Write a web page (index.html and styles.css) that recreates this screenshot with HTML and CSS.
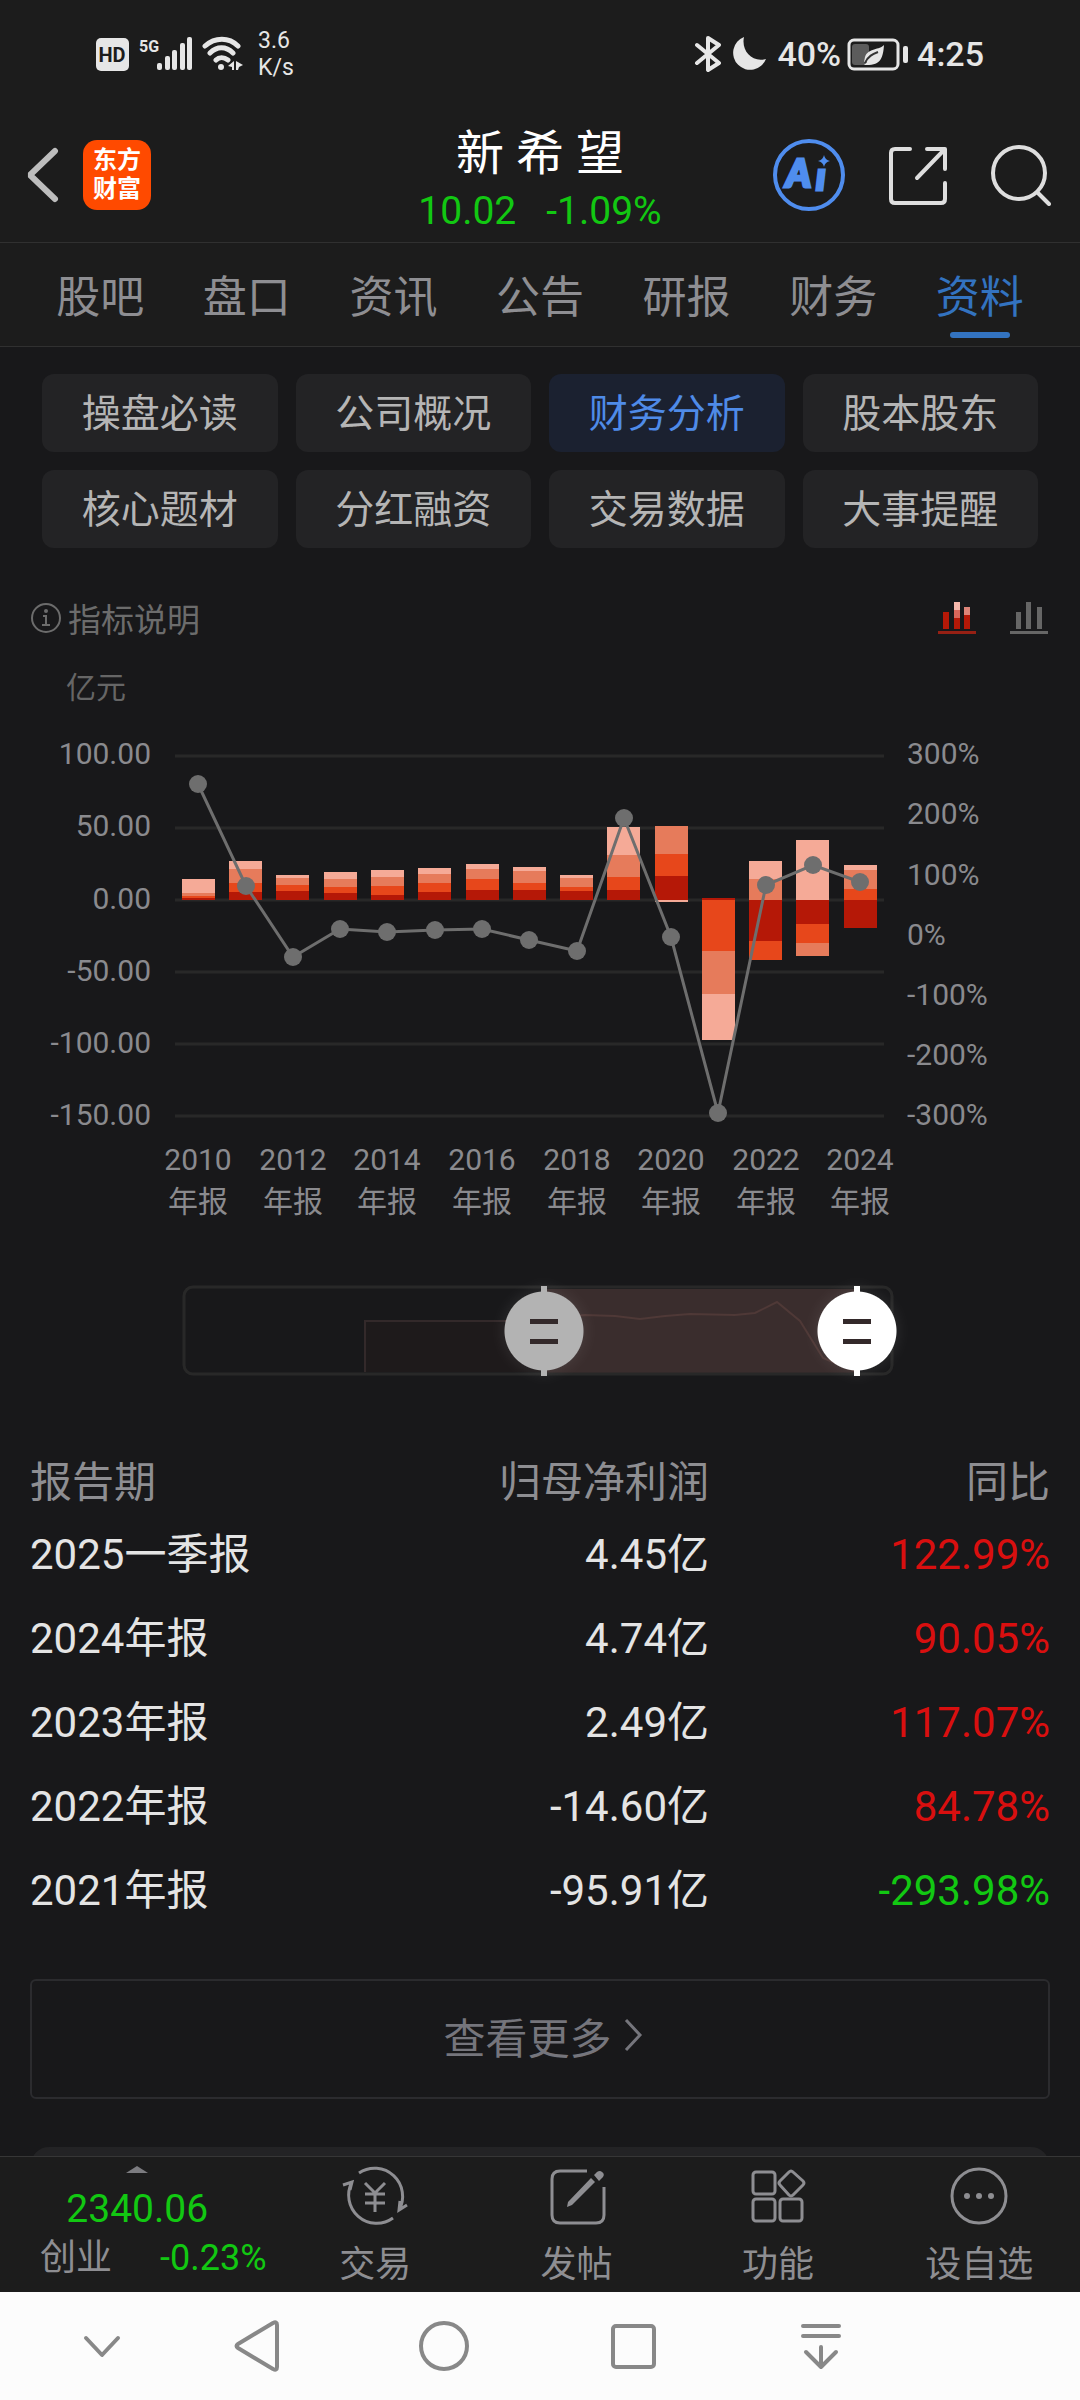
FILE: index.html
```html
<!DOCTYPE html>
<html lang="zh-CN">
<head>
<meta charset="utf-8">
<meta name="viewport" content="width=device-width, initial-scale=1">
<title>新希望 - 财务分析</title>
<link rel="stylesheet" href="styles.css">
</head>
<body>
<div class="app">
  <div class="status">
    <div class="status-group">
      <svg class="hd" width="33" height="33" viewBox="0 0 33 33"><rect width="33" height="33" rx="5" fill="#e6e6e6"/><text x="16" y="24" text-anchor="middle" font-size="20" font-weight="700" fill="#1c1c1c">HD</text></svg>
      <svg class="signal" width="53" height="36" viewBox="0 0 53 36" fill="#e6e6e6"><text x="0" y="16" font-size="16" font-weight="700">5G</text><rect x="18" y="27" width="5" height="7" rx="2"/><rect x="26" y="20" width="5" height="14" rx="2"/><rect x="33" y="14" width="5" height="20" rx="2"/><rect x="41" y="7" width="5" height="27" rx="2"/><rect x="48" y="1" width="5" height="33" rx="2"/></svg>
      <svg class="wifi" width="42" height="36" viewBox="0 0 42 36" fill="none" stroke="#e6e6e6" stroke-width="5" stroke-linecap="round"><path d="M3 10C13 1 27 1 36 10M8 17C15 10 24 10 31 17M14 24C17 21 22 21 26 24"/><circle cx="19" cy="31" r="3" fill="#e6e6e6" stroke="none"/><path fill="#e6e6e6" stroke="none" d="M32 25v9h-2v-3l-4-1zM34 25l7 4-4 2-1 3h-2z"/></svg>
      <div class="speed">3.6<br>K/s</div>
    </div>
    <div class="status-group">
      <svg class="bt" width="28" height="36" viewBox="0 0 28 36" fill="none" stroke="#e6e6e6" stroke-width="4" stroke-linejoin="round" stroke-linecap="round"><path d="M3 9l22 18-11 7V2l11 7L3 27"/></svg>
      <svg class="moon" width="35" height="36" viewBox="0 0 35 36"><path d="M12 1A17 17 0 1 0 34 23C20 27 9 15 12 1z" fill="#e6e6e6"/></svg>
      <span class="clock">40%</span>
      <svg class="battery" width="62" height="33" viewBox="0 0 62 33"><rect x="2" y="2" width="49" height="29" rx="5" fill="none" stroke="#e6e6e6" stroke-width="3"/><rect x="5" y="6" width="17" height="21" rx="3" fill="#5c5c5c"/><path d="M37 7C33 12 21 10 18 19L17 24 20 24 17 27C34 28 36 20 37 7z" fill="#e6e6e6"/><path d="M18 25C21 18 26 16 31 14" stroke="#333" stroke-width="2" fill="none"/><rect x="56" y="8" width="5" height="17" rx="2" fill="#e6e6e6"/></svg>
      <span class="clock">4:25</span>
    </div>
  </div>

  <header class="header">
    <div class="header-left">
      <button class="icon-btn" aria-label="返回"><svg width="34" height="58" viewBox="0 0 34 58" fill="none" stroke="#bdbdbd" stroke-width="6" stroke-linecap="round" stroke-linejoin="bevel"><path d="M30 5L5 29l25 24"/></svg></button>
      <a class="logo" href="#">东方<br>财富</a>
    </div>
    <div class="quote">
      <h1>新 希 望</h1>
      <p class="quote-row down"><span>10.02</span><span>-1.09%</span></p>
    </div>
    <div class="header-right">
      <button class="icon-btn" aria-label="智能助手"><svg width="72" height="72" viewBox="0 0 72 72"><circle cx="36" cy="36" r="34" fill="none" stroke="#4f8dee" stroke-width="4"/><text class="ai" x="13" y="48" font-size="38">A</text><text class="ai" x="43" y="51" font-size="38">ı</text><path d="M51 16q1 5 6 6-5 1-6 6-1-5-6-6 5-1 6-6z" fill="#4f8dee"/></svg></button>
      <button class="icon-btn" aria-label="分享"><svg width="60" height="60" viewBox="0 0 60 60" fill="none" stroke="#dedede" stroke-width="4" stroke-linecap="round" stroke-linejoin="round"><path d="M22 4H7Q3 4 3 8v46q0 4 4 4h46q4 0 4-4V38M39 4h18v20M56 5L29 33"/></svg></button>
      <button class="icon-btn" aria-label="搜索"><svg width="60" height="62" viewBox="0 0 60 62" fill="none" stroke="#dedede" stroke-width="4" stroke-linecap="round"><circle cx="28" cy="29" r="26"/><path d="M47 49l11 11"/></svg></button>
    </div>
  </header>

  <nav class="tabs">
    <a href="#">股吧</a><a href="#">盘口</a><a href="#">资讯</a><a href="#">公告</a><a href="#">研报</a><a href="#">财务</a><a href="#" class="active" aria-current="page">资料</a>
  </nav>

  <main class="content">
    <div class="chips">
      <button>操盘必读</button><button>公司概况</button><button class="active">财务分析</button><button>股本股东</button>
      <button>核心题材</button><button>分红融资</button><button>交易数据</button><button>大事提醒</button>
    </div>

    <div class="chart-head">
      <button class="explain"><svg width="32" height="32" viewBox="0 0 32 32" fill="none" stroke="#6c6c6c" stroke-width="2"><circle cx="16" cy="16" r="14"/><path d="M13 14h3v9M12 23h8"/><circle cx="16" cy="9" r="2" fill="#6c6c6c" stroke="none"/></svg>指标说明</button>
      <div class="modes">
        <button class="icon-btn" aria-label="堆叠图"><svg width="40" height="34" viewBox="0 0 40 34"><g fill="#b51807"><rect x="6" y="11" width="6" height="17"/><rect x="17" y="17" width="6" height="11"/><rect x="27" y="14" width="6" height="14"/></g><rect x="17" y="1" width="6" height="8" fill="#f6b8ac"/><rect x="17" y="9" width="6" height="8" fill="#d9665a"/><rect x="27" y="6" width="6" height="8" fill="#dd8478"/><rect x="1" y="30" width="38" height="3" fill="#962014"/></svg></button>
        <button class="icon-btn" aria-label="柱状图"><svg width="40" height="34" viewBox="0 0 40 34" fill="#666"><rect x="7" y="11" width="5" height="17"/><rect x="17" y="1" width="5" height="27"/><rect x="28" y="6" width="5" height="22"/><rect x="1" y="30" width="38" height="3"/></svg></button>
      </div>
    </div>

    <svg class="chart" viewBox="0 0 1080 580" role="img" aria-label="归母净利润与同比">
      <text class="unit" x="66" y="38">亿元</text>
      <path class="grid" d="M175 96h709M175 168h709M175 240h709M175 312h709M175 384h709M175 456h709"/>
      <g class="axis axis-end">
        <text x="151" y="104">100.00</text><text x="151" y="176">50.00</text><text x="151" y="249">0.00</text><text x="151" y="321">-50.00</text><text x="151" y="393">-100.00</text><text x="151" y="465">-150.00</text>
      </g>
      <g class="axis">
        <text x="907" y="104">300%</text><text x="907" y="164">200%</text><text x="907" y="225">100%</text><text x="907" y="285">0%</text><text x="907" y="345">-100%</text><text x="907" y="405">-200%</text><text x="907" y="465">-300%</text>
      </g>
      <g class="q4">
        <rect x="182" y="219" width="33" height="14"/><rect x="229" y="201" width="33" height="8"/><rect x="276" y="215" width="33" height="3"/><rect x="324" y="212" width="33" height="7"/><rect x="371" y="210" width="33" height="7"/><rect x="418" y="208" width="33" height="6"/><rect x="466" y="204" width="33" height="5"/><rect x="513" y="207" width="33" height="4"/><rect x="560" y="215" width="33" height="3"/><rect x="607" y="167" width="33" height="28"/><rect x="655" y="240" width="33" height="2"/><rect x="702" y="334" width="33" height="46"/><rect x="749" y="201" width="33" height="18"/><rect x="796" y="180" width="33" height="60"/><rect x="844" y="205" width="33" height="5"/>
      </g>
      <g class="q3">
        <rect x="182" y="233" width="33" height="3"/><rect x="229" y="209" width="33" height="14"/><rect x="276" y="218" width="33" height="7"/><rect x="324" y="219" width="33" height="8"/><rect x="371" y="217" width="33" height="9"/><rect x="418" y="214" width="33" height="9"/><rect x="466" y="209" width="33" height="10"/><rect x="513" y="211" width="33" height="12"/><rect x="560" y="218" width="33" height="9"/><rect x="607" y="195" width="33" height="22"/><rect x="655" y="166" width="33" height="28"/><rect x="702" y="291" width="33" height="43"/><rect x="749" y="219" width="33" height="21"/><rect x="796" y="283" width="33" height="13"/><rect x="844" y="210" width="33" height="19"/>
      </g>
      <g class="q2">
        <rect x="182" y="236" width="33" height="2"/><rect x="229" y="223" width="33" height="9"/><rect x="276" y="225" width="33" height="6"/><rect x="324" y="227" width="33" height="6"/><rect x="371" y="226" width="33" height="9"/><rect x="418" y="223" width="33" height="9"/><rect x="466" y="219" width="33" height="11"/><rect x="513" y="223" width="33" height="7"/><rect x="560" y="227" width="33" height="4"/><rect x="607" y="217" width="33" height="13"/><rect x="655" y="194" width="33" height="22"/><rect x="702" y="240" width="33" height="51"/><rect x="749" y="281" width="33" height="19"/><rect x="796" y="264" width="33" height="19"/><rect x="844" y="229" width="33" height="11"/>
      </g>
      <g class="q1">
        <rect x="182" y="238" width="33" height="2"/><rect x="229" y="232" width="33" height="8"/><rect x="276" y="231" width="33" height="9"/><rect x="324" y="233" width="33" height="7"/><rect x="371" y="235" width="33" height="5"/><rect x="418" y="232" width="33" height="8"/><rect x="466" y="230" width="33" height="10"/><rect x="513" y="230" width="33" height="10"/><rect x="560" y="231" width="33" height="9"/><rect x="607" y="230" width="33" height="10"/><rect x="655" y="216" width="33" height="24"/><rect x="702" y="238" width="33" height="2"/><rect x="749" y="240" width="33" height="41"/><rect x="796" y="240" width="33" height="24"/><rect x="844" y="240" width="33" height="28"/>
      </g>
      <polyline class="line" points="198,124 246,226 293,297 340,269 387,272 435,270 482,269 529,280 577,291 624,158 671,277 718,453 766,225 813,205 860,222"/>
      <g class="dots">
        <circle cx="198" cy="124" r="9"/><circle cx="246" cy="226" r="9"/><circle cx="293" cy="297" r="9"/><circle cx="340" cy="269" r="9"/><circle cx="387" cy="272" r="9"/><circle cx="435" cy="270" r="9"/><circle cx="482" cy="269" r="9"/><circle cx="529" cy="280" r="9"/><circle cx="577" cy="291" r="9"/><circle cx="624" cy="158" r="9"/><circle cx="671" cy="277" r="9"/><circle cx="718" cy="453" r="9"/><circle cx="766" cy="225" r="9"/><circle cx="813" cy="205" r="9"/><circle cx="860" cy="222" r="9"/>
      </g>
      <g class="axis axis-mid">
        <text x="198" y="510">2010</text><text x="198" y="552">年报</text>
        <text x="293" y="510">2012</text><text x="293" y="552">年报</text>
        <text x="387" y="510">2014</text><text x="387" y="552">年报</text>
        <text x="482" y="510">2016</text><text x="482" y="552">年报</text>
        <text x="577" y="510">2018</text><text x="577" y="552">年报</text>
        <text x="671" y="510">2020</text><text x="671" y="552">年报</text>
        <text x="766" y="510">2022</text><text x="766" y="552">年报</text>
        <text x="860" y="510">2024</text><text x="860" y="552">年报</text>
      </g>
    </svg>

    <div class="range">
      <svg viewBox="0 0 1080 92" aria-hidden="true">
        <rect x="544" y="4" width="313" height="84" fill="#3a2d2d"/>
        <path d="M365 87V36H544V87z" fill="#1e1a1b"/>
        <path d="M365 87V36H505" fill="none" stroke="#33292a" stroke-width="2"/>
        <path d="M505 36L585 30 615 31 640 34 665 31 690 29 735 30 755 28 777 17 800 36 823 73 857 87" fill="none" stroke="#4f3937" stroke-width="2"/>
        <rect x="184" y="2" width="708" height="87" rx="9" fill="none" stroke="#282828" stroke-width="3"/>
      </svg>
      <input class="thumb-start" type="range" min="0" max="708" value="360" aria-label="起始报告期">
      <input class="thumb-end" type="range" min="0" max="708" value="673" aria-label="结束报告期">
    </div>

    <table class="report">
      <thead><tr><th>报告期</th><th>归母净利润</th><th>同比</th></tr></thead>
      <tbody>
        <tr><td>2025一季报</td><td>4.45亿</td><td class="up">122.99%</td></tr>
        <tr><td>2024年报</td><td>4.74亿</td><td class="up">90.05%</td></tr>
        <tr><td>2023年报</td><td>2.49亿</td><td class="up">117.07%</td></tr>
        <tr><td>2022年报</td><td>-14.60亿</td><td class="up">84.78%</td></tr>
        <tr><td>2021年报</td><td>-95.91亿</td><td class="down">-293.98%</td></tr>
      </tbody>
    </table>

    <button class="more">查看更多<svg width="20" height="34" viewBox="0 0 20 34" fill="none" stroke="#75757c" stroke-width="3"><path d="M3 2l14 15L3 32"/></svg></button>
    <section class="next-card"></section>
  </main>

  <footer class="toolbar">
    <button class="index">
      <svg width="22" height="7" viewBox="0 0 22 7"><path d="M0 7L11 0l11 7z" fill="#7c7c80"/></svg>
      <span class="index-value down">2340.06</span>
      <span class="index-row"><span>创业</span><span class="down">-0.23%</span></span>
    </button>
    <button class="tool"><svg width="68" height="60" viewBox="0 0 68 60" fill="none" stroke="#8e8e92" stroke-width="3"><path d="M18 7A28 28 0 0 1 58 44M52 52A28 28 0 0 1 11 16M2 19l9-3-2 8M59 35l-1 9 8-5"/><path d="M24 17l10 10 10-10M34 27v19M24 28h20M24 37h20"/></svg>交易</button>
    <button class="tool"><svg width="60" height="60" viewBox="0 0 60 60" fill="none" stroke="#8e8e92" stroke-width="3"><path d="M40 5H13Q5 5 5 13v36q0 8 8 8h36q8 0 8-8V21"/><path d="M44 12L21 36l-1 5 5-2 23-23zM47 9l3-3q3-2 5 0 3 2 1 5l-4 4z" fill="#8e8e92" stroke="none"/></svg>发帖</button>
    <button class="tool"><svg width="60" height="60" viewBox="0 0 60 60" fill="none" stroke="#8e8e92" stroke-width="3"><rect x="5" y="6" width="22" height="22" rx="3"/><rect x="5" y="33" width="22" height="22" rx="3"/><rect x="32" y="33" width="22" height="22" rx="3"/><path d="M41 6q2-2 4 0l10 9q2 2 0 4l-10 10q-2 2-4 0L32 19q-2-2 0-4z"/></svg>功能</button>
    <button class="tool"><svg width="60" height="60" viewBox="0 0 60 60" fill="#8e8e92"><circle cx="30" cy="30" r="27" fill="none" stroke="#8e8e92" stroke-width="3"/><circle cx="18" cy="30" r="3"/><circle cx="30" cy="30" r="3"/><circle cx="42" cy="30" r="3"/></svg>设自选</button>
  </footer>

  <nav class="sysnav">
    <button aria-label="收起"><svg width="40" height="50" viewBox="0 0 40 50"><path d="M4 17l16 17 16-17"/></svg></button>
    <button aria-label="返回"><svg width="50" height="52" viewBox="0 0 50 52"><path d="M7 24Q4 26 7 28L42 49Q46 51 46 47V5Q46 1 42 3z"/></svg></button>
    <button aria-label="主页"><svg width="52" height="52" viewBox="0 0 52 52"><circle cx="26" cy="26" r="23"/></svg></button>
    <button aria-label="最近任务"><svg width="50" height="50" viewBox="0 0 50 50"><rect x="5" y="5" width="41" height="41" rx="3"/></svg></button>
    <button aria-label="通知"><svg width="44" height="50" viewBox="0 0 44 50"><path d="M4 5h36M4 15h36M22 26v19M7 31l15 15 15-15"/></svg></button>
  </nav>
</div>
</body>
</html>
```
FILE: styles.css
```css
* { box-sizing: border-box; }
body {
  margin: 0;
  background: #18181a;
  color: #e4e4e4;
  font-family: Roboto, "Noto Sans CJK SC", sans-serif;
}
button {
  margin: 0;
  padding: 0;
  border: 0;
  background: none;
  color: inherit;
  font: inherit;
}
a { color: inherit; text-decoration: none; }
svg { display: block; }
.down { color: #12c812; }
.up { color: #d90f0f; }

.app { display: flex; flex-direction: column; height: 100vh; }

/* status bar */
.status {
  display: flex;
  flex: none;
  align-items: center;
  justify-content: space-between;
  height: 108px;
  padding: 0 96px;
  background: #1c1c1c;
  color: #e6e6e6;
}
.status-group { display: flex; align-items: center; gap: 10px; }
.speed { margin-left: 4px; font-size: 23px; line-height: 27px; }
.battery { margin: 0 -2px 0 -4px; }
.clock { font-size: 34px; font-weight: 500; line-height: 36px; }

/* stock header */
.header {
  display: grid;
  flex: none;
  grid-template-columns: 1fr auto 1fr;
  align-items: center;
  height: 135px;
  padding: 0 29px 0 25px;
  border-bottom: 1px solid #303030;
  background: #1c1c1c;
}
.header-left { display: flex; align-items: center; gap: 24px; }
.header-right { display: flex; align-items: center; justify-content: flex-end; gap: 43px; }
.logo {
  width: 68px;
  height: 70px;
  padding: 6px 0;
  border-radius: 14px;
  background: #ff4a00;
  color: #fff;
  font-size: 24px;
  font-weight: 700;
  line-height: 29px;
  text-align: center;
}
.quote { padding: 12px 0 0 4px; text-align: center; }
.quote h1 { margin: 0; color: #fff; font-size: 48px; font-weight: 400; line-height: 60px; }
.quote-row {
  display: flex;
  justify-content: center;
  gap: 30px;
  margin: 0;
  font-size: 39px;
  line-height: 54px;
}
.ai { fill: #4f8dee; stroke: #4f8dee; stroke-width: 3px; font-family: Lato, sans-serif; font-weight: 900; font-style: italic; }

/* section tabs */
.tabs {
  display: flex;
  flex: none;
  height: 104px;
  padding: 0 27px;
  border-bottom: 1px solid #303030;
  background: #1c1c1c;
  color: #8e8e92;
  font-size: 44px;
  line-height: 110px;
}
.tabs a { position: relative; flex: 1; height: 103px; text-align: center; }
.tabs .active { color: #3373c0; }
.tabs .active::after {
  content: "";
  position: absolute;
  bottom: 8px;
  left: 50%;
  width: 60px;
  height: 6px;
  margin-left: -30px;
  border-radius: 3px;
  background: #3373c0;
}

.content { flex: 1; min-height: 0; overflow: auto; scrollbar-width: none; }

.chips {
  display: grid;
  grid-template-columns: repeat(4, 1fr);
  gap: 18px;
  padding: 27px 42px 0;
}
.chips button {
  height: 78px;
  padding-bottom: 7px;
  border-radius: 12px;
  background: #232325;
  color: #b5b5b5;
  font-size: 39px;
}
.chips .active { background: #1b2130; color: #4f8be8; }

.chart-head {
  display: flex;
  align-items: center;
  justify-content: space-between;
  height: 112px;
  padding: 28px 31px 0 30px;
}
.explain { display: flex; align-items: center; gap: 6px; color: #6c6c6c; font-size: 33px; }
.modes { display: flex; gap: 32px; }

.chart { width: 100%; }
.unit { fill: #666; font-size: 30px; }
.axis { fill: #8a8a8e; font-size: 30px; }
.axis-end { text-anchor: end; }
.axis-mid { text-anchor: middle; }
.grid { stroke: #282828; stroke-width: 3; }
.q1 { fill: #b51807; }
.q2 { fill: #e7471b; }
.q3 { fill: #e67b5b; }
.q4 { fill: #f5aa97; }
.line { fill: none; stroke: #6e6e6e; stroke-width: 3; }
.dots { fill: #6e6e6e; }

/* period range slider */
.range { display: grid; margin-top: 45px; }
.range svg, .range input { grid-area: 1 / 1; }
.range svg { width: 100%; }
.range input {
  appearance: none;
  height: 92px;
  margin: 0 148px 0 144px;
  background: none;
  pointer-events: none;
  filter: drop-shadow(0 0 8px rgba(255, 255, 255, 0.1));
}
.range input::-webkit-slider-thumb {
  appearance: none;
  width: 80px;
  height: 92px;
  border: 0;
  background:
    linear-gradient(#33292a, #33292a) 50% 34px / 28px 5px no-repeat,
    linear-gradient(#33292a, #33292a) 50% 54px / 28px 5px no-repeat,
    linear-gradient(var(--thumb), var(--thumb)) 50% 50% / 6px 90px no-repeat,
    radial-gradient(circle at 50% 50%, var(--thumb) 39px, transparent 40px);
  pointer-events: auto;
}
.thumb-start { --thumb: #b3b3b3; }
.thumb-end { --thumb: #fff; }

.report {
  width: 100%;
  margin-top: 76px;
  padding: 0 30px;
  border-spacing: 0;
  table-layout: fixed;
  font-size: 42px;
}
.report th, .report td { height: 84px; padding: 0; font-weight: 400; line-height: 60px; text-align: right; }
.report th { height: 60px; color: #8e8e92; }
.report th:first-child, .report td:first-child { width: 338px; text-align: left; }
.report th:nth-child(2) { width: 341px; }

.more {
  display: flex;
  align-items: center;
  justify-content: center;
  gap: 11px;
  width: calc(100% - 60px);
  height: 120px;
  margin: 46px 30px 48px;
  padding: 0 0 8px 6px;
  border: 2px solid #2b2b2e;
  border-radius: 6px;
  color: #75757c;
  font-size: 42px;
}
.next-card { height: 200px; margin: 0 31px; border-radius: 18px; background: #232325; }

/* bottom toolbar */
.toolbar {
  display: grid;
  flex: none;
  grid-template-columns: 274fr repeat(4, 201fr);
  height: 136px;
  border-top: 1px solid #363636;
  background: #1c1c1c;
  color: #8e8e92;
  font-size: 36px;
}
.index { display: flex; flex-direction: column; align-items: center; padding-top: 9px; }
.index-value { margin-top: 12px; font-size: 39px; line-height: 48px; }
.index-row { display: flex; gap: 48px; padding-left: 32px; line-height: 50px; }
.tool { display: flex; flex-direction: column; align-items: center; gap: 15px; padding-top: 9px; line-height: 48px; }

.sysnav {
  display: grid;
  flex: none;
  grid-template-columns: 119fr 189fr 188fr 189fr 188fr;
  place-items: center;
  height: 108px;
  padding: 0 165px 0 42px;
  background: #fcfcfc;
}
.sysnav svg { fill: none; stroke: #888; stroke-width: 4; stroke-linecap: round; stroke-linejoin: round; }
```
